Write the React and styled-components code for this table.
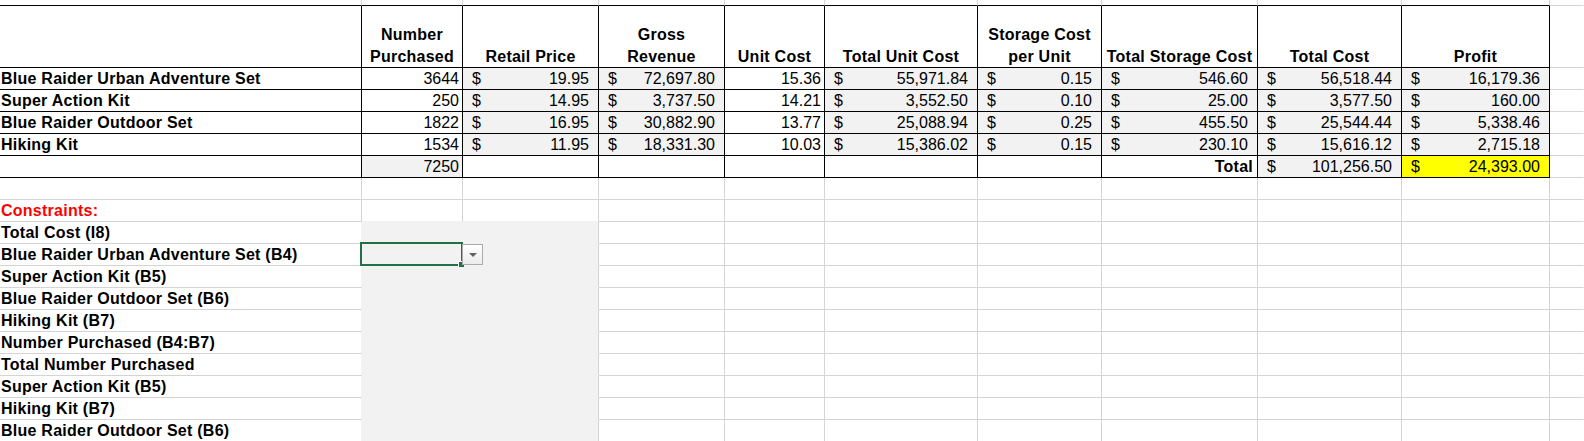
import React from 'react';
import styled, { createGlobalStyle } from 'styled-components';

const GRID = '#d4d4d4';
const INK = '#000';
const SHADE = '#f2f2f2';
const YELLOW = '#ffff00';

const GlobalStyle = createGlobalStyle`
  html, body {
    margin: 0;
    padding: 0;
    background: #fff;
    overflow: hidden;
  }
  body {
    font-family: 'Liberation Sans', Arial, sans-serif;
    font-size: 16px;
    color: #000;
  }
`;

const Sheet = styled.div`
  display: grid;
  grid-template-columns: 362px 101px 136px 126px 100px 153px 124px 156px 144px 148px 1fr;
  grid-template-rows: 6px 62px;
  grid-auto-rows: 22px;
  width: 1584px;
  height: 441px;
  overflow: hidden;
`;

const Cell = styled.div`
  box-sizing: border-box;
  position: relative;
  display: flex;
  align-items: flex-end;
  justify-content: ${({ $align }) => $align || 'flex-start'};
  padding: 0 ${({ $pad }) => $pad ?? 2}px;
  background: ${({ $fill }) => $fill || '#fff'};
  border-right: 1px solid ${({ $rb }) => $rb || GRID};
  border-bottom: 1px solid ${({ $bb }) => $bb || GRID};
  font-weight: ${({ $bold }) => ($bold ? 700 : 400)};
  letter-spacing: ${({ $bold }) => ($bold ? '0.25px' : '0')};
  color: ${({ $color }) => $color || '#000'};
  line-height: 20px;
  white-space: nowrap;
  z-index: ${({ $raised }) => ($raised ? 2 : 'auto')};
`;

const MoneyCell = styled(Cell)`
  justify-content: space-between;
  padding: 0 9px;
`;

const HeadText = styled.div`
  width: 100%;
  text-align: center;
  line-height: 22px;
  margin-bottom: -1px;
`;

const SelectBox = styled.div`
  position: absolute;
  top: -2px;
  left: -2px;
  right: -1px;
  bottom: -1px;
  border: 2px solid #217346;
  pointer-events: none;
`;

const FillHandle = styled.div`
  position: absolute;
  right: -3px;
  bottom: -3px;
  width: 5px;
  height: 5px;
  background: #217346;
  box-shadow: -1px -1px 0 #fff;
`;

const DropButton = styled.div`
  position: absolute;
  top: 0;
  left: 100%;
  box-sizing: border-box;
  width: 21px;
  height: 21px;
  border: 1px solid #ababab;
  background: linear-gradient(#ffffff, #ececec);
  display: flex;
  align-items: center;
  justify-content: center;

  &::after {
    content: '';
    border-left: 4px solid transparent;
    border-right: 4px solid transparent;
    border-top: 4px solid #606060;
  }
`;

const money = (n) =>
  n.toLocaleString('en-US', { minimumFractionDigits: 2, maximumFractionDigits: 2 });

const headers = [
  ['Number', 'Purchased'],
  ['Retail Price'],
  ['Gross', 'Revenue'],
  ['Unit Cost'],
  ['Total Unit Cost'],
  ['Storage Cost', 'per Unit'],
  ['Total Storage Cost'],
  ['Total Cost'],
  ['Profit'],
];

const products = [
  ['Blue Raider Urban Adventure Set', 3644, 19.95, 72697.8, 15.36, 55971.84, 0.15, 546.6, 56518.44, 16179.36],
  ['Super Action Kit', 250, 14.95, 3737.5, 14.21, 3552.5, 0.1, 25.0, 3577.5, 160.0],
  ['Blue Raider Outdoor Set', 1822, 16.95, 30882.9, 13.77, 25088.94, 0.25, 455.5, 25544.44, 5338.46],
  ['Hiking Kit', 1534, 11.95, 18331.3, 10.03, 15386.02, 0.15, 230.1, 15616.12, 2715.18],
];

const constraints = [
  'Total Cost (I8)',
  'Blue Raider Urban Adventure Set (B4)',
  'Super Action Kit (B5)',
  'Blue Raider Outdoor Set (B6)',
  'Hiking Kit (B7)',
  'Number Purchased (B4:B7)',
  'Total Number Purchased',
  'Super Action Kit (B5)',
  'Hiking Kit (B7)',
  'Blue Raider Outdoor Set (B6)',
];

const Money = ({ value, fill }) => (
  <MoneyCell $fill={fill} $rb={INK} $bb={INK}>
    <span>$</span>
    <span>{money(value)}</span>
  </MoneyCell>
);

// columns D..J of the sheet that stay blank below the table
const EmptyRest = () =>
  Array.from({ length: 8 }, (_, i) => <Cell key={i} $rb={i === 7 ? 'transparent' : GRID} />);

const App = () => {
  return (
    <>
      <GlobalStyle />
      <Sheet>
        {/* row 2, only its bottom edge shows */}
        {Array.from({ length: 10 }, (_, i) => (
          <Cell key={`top${i}`} $bb={INK} />
        ))}
        <Cell $rb="transparent" />

        {/* header row */}
        <Cell $rb={INK} $bb={INK} />
        {headers.map((lines, i) => (
          <Cell key={`h${i}`} $bold $align="center" $rb={INK} $bb={INK}>
            <HeadText>
              {lines.map((l) => (
                <div key={l}>{l}</div>
              ))}
            </HeadText>
          </Cell>
        ))}
        <Cell $rb="transparent" />

        {products.map(([name, qty, retail, gross, unit, totalUnit, store, totalStore, totalCost, profit]) => (
          <React.Fragment key={name}>
            <Cell $bold $pad={1} $rb={INK} $bb={INK}>{name}</Cell>
            <Cell $align="flex-end" $pad={3} $rb={INK} $bb={INK}>{qty}</Cell>
            <Money value={retail} fill={SHADE} />
            <Money value={gross} fill={SHADE} />
            <Cell $align="flex-end" $pad={3} $rb={INK} $bb={INK}>{unit.toFixed(2)}</Cell>
            <Money value={totalUnit} fill={SHADE} />
            <Money value={store} fill={SHADE} />
            <Money value={totalStore} fill={SHADE} />
            <Money value={totalCost} fill={SHADE} />
            <Money value={profit} fill={SHADE} />
            <Cell $rb="transparent" />
          </React.Fragment>
        ))}

        {/* totals */}
        <Cell $rb={INK} $bb={INK} />
        <Cell $align="flex-end" $pad={3} $fill={SHADE} $rb={INK} $bb={INK}>7250</Cell>
        <Cell $rb={INK} $bb={INK} />
        <Cell $rb={INK} $bb={INK} />
        <Cell $rb={INK} $bb={INK} />
        <Cell $rb={INK} $bb={INK} />
        <Cell $rb={INK} $bb={INK} />
        <Cell $bold $align="flex-end" $pad={4} $rb={INK} $bb={INK}>Total</Cell>
        <Money value={101256.5} fill={SHADE} />
        <Money value={24393.0} fill={YELLOW} />
        <Cell $rb="transparent" />

        {/* blank row */}
        <Cell />
        <Cell />
        <Cell />
        <EmptyRest />

        {/* constraints heading */}
        <Cell $bold $pad={1} $color="#ff0000">Constraints:</Cell>
        <Cell $bb={SHADE} />
        <Cell $bb={SHADE} />
        <EmptyRest />

        {constraints.map((label, i) => (
          <React.Fragment key={`c${i}`}>
            <Cell $bold $pad={1} $rb={SHADE}>{label}</Cell>
            <Cell $fill={SHADE} $rb={SHADE} $bb={SHADE} $raised={i === 1}>
              {i === 1 && (
                <>
                  <SelectBox>
                    <FillHandle />
                  </SelectBox>
                  <DropButton />
                </>
              )}
            </Cell>
            <Cell $fill={SHADE} $bb={SHADE} />
            <EmptyRest />
          </React.Fragment>
        ))}
      </Sheet>
    </>
  );
};

export default App;
